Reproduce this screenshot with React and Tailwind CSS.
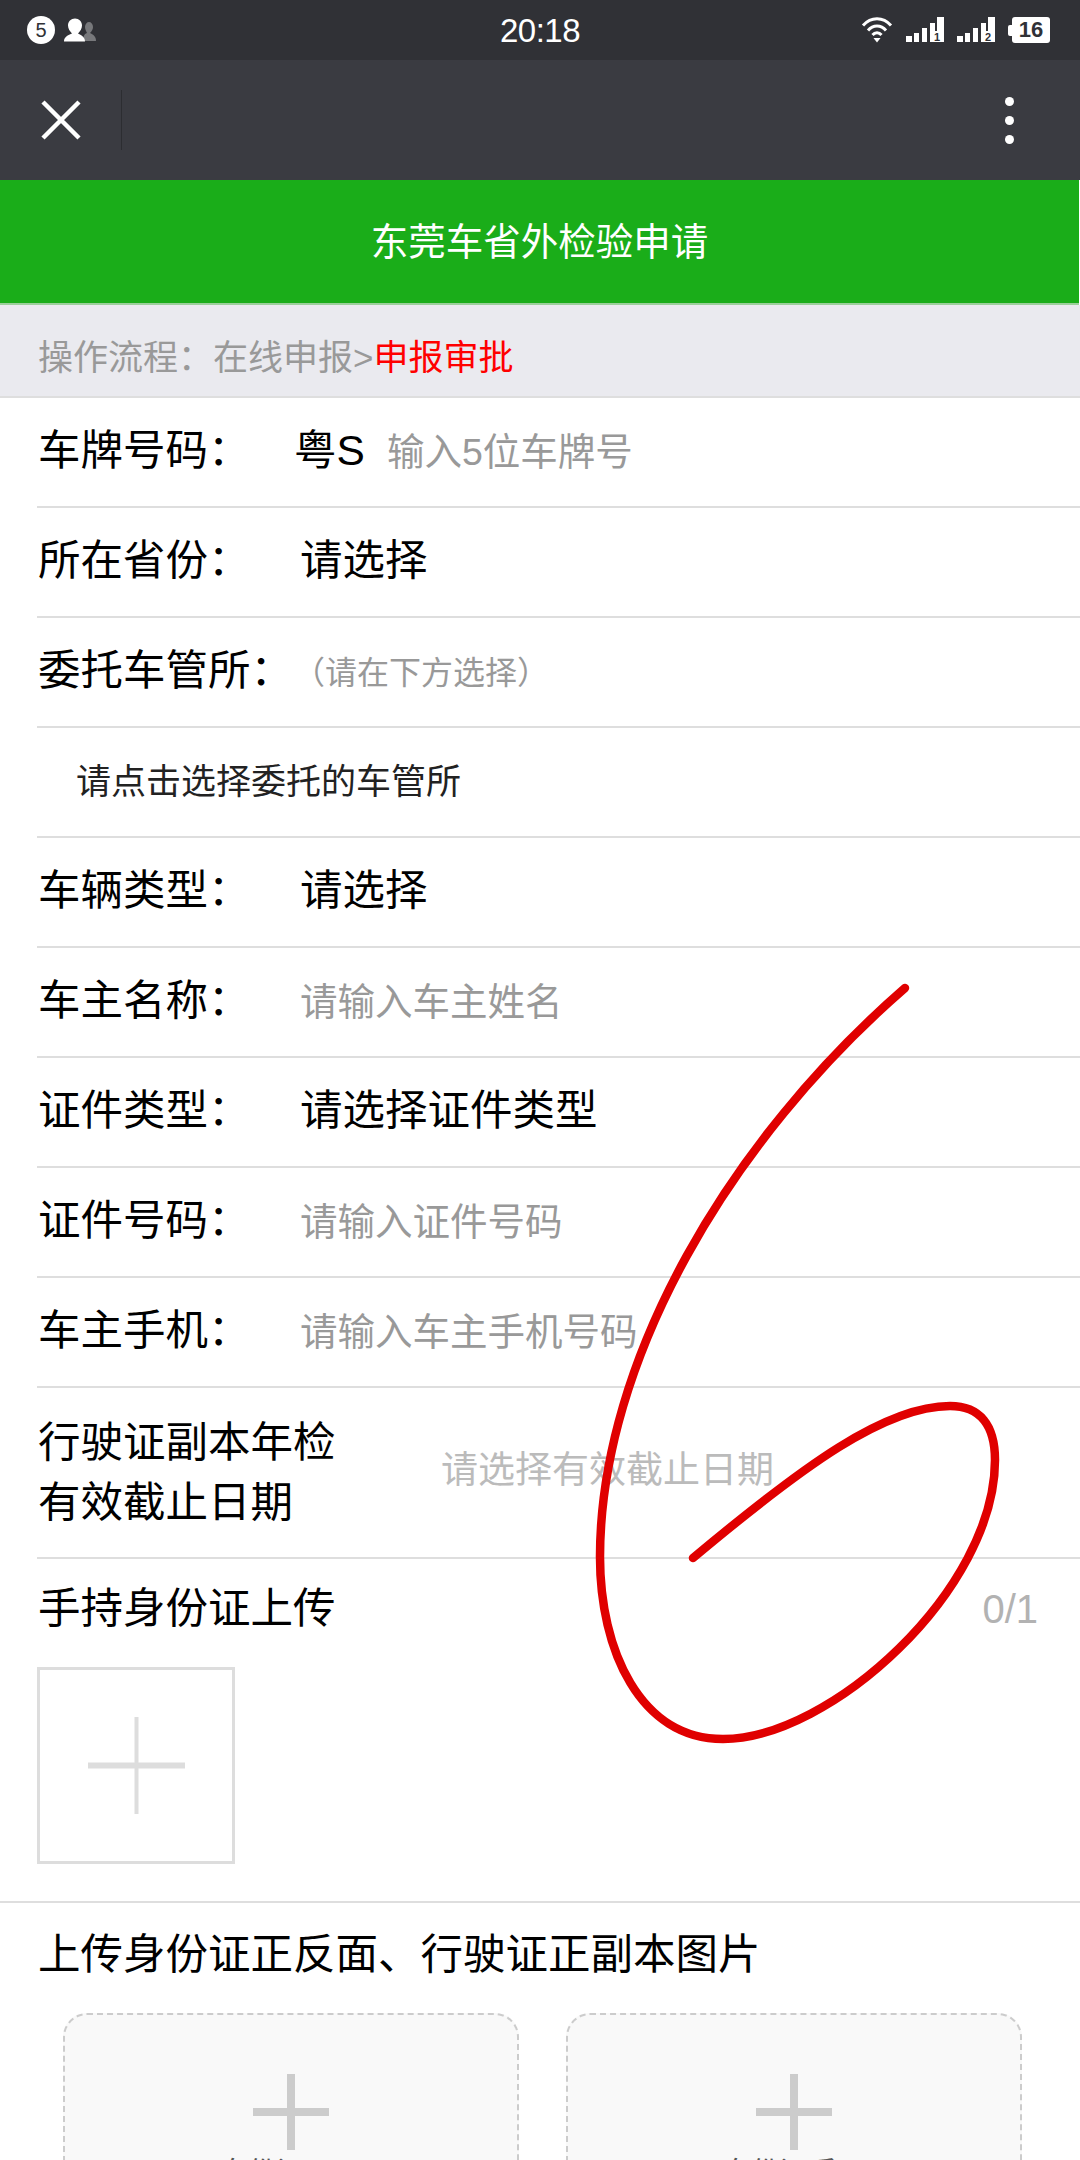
import React from 'react';

const Signal = ({ n }) => (
  <svg width="38" height="26" viewBox="0 0 38 26" className="block">
    <rect x="0" y="19" width="6" height="6" fill="#fff" />
    <rect x="8" y="16" width="5" height="9" fill="#fff" />
    <rect x="16" y="11" width="5" height="14" fill="#fff" />
    <rect x="24" y="6" width="5" height="19" fill="#fff" />
    <rect x="31" y="0" width="7" height="25" fill="#fff" />
    <rect x="24" y="14" width="14" height="11" fill="#fff" />
    <text x="31" y="24" textAnchor="middle" fontSize="11" fontWeight="700" fill="#303136" fontFamily="Liberation Sans">{n}</text>
  </svg>
);

const StatusBar = () => (
  <div className="h-[60px] bg-[#303136] flex items-center justify-between pl-[27px] pr-[30px] relative">
    <div className="flex items-center gap-[9px]">
      <div className="w-[28px] h-[28px] rounded-full bg-white flex items-center justify-center text-[20px] text-[#303136] leading-none">5</div>
      <svg width="33" height="24" viewBox="0 0 33 24" className="block">
        <path d="M19 23h13c0-4-2-6-6-8 2-2 3-4 3-6 0-3-2-5-4-5s-4 2-4 5c0 2 1 4 2 6-3 1-4 4-4 8z" fill="#77787b" />
        <path d="M0 23.500h21c0-4-3-6-7-8 2-2 4-5 4-8 0-4-3-7-7-7s-7 3-7 7c0 3 2 6 4 8-5 2-8 4-8 8z" fill="#fff" />
      </svg>
    </div>
    <div className="absolute left-[500px] top-[13px] text-[33px] leading-[36px] text-white tracking-[-0.5px]">20:18</div>
    <div className="flex items-center">
      <svg width="32" height="26" viewBox="0 0 32 26" className="block mr-[13px]">
        <path d="M2 8.500C10-.5 22-.5 30 8.500" fill="none" stroke="#fff" strokeWidth="3" />
        <path d="M7 13.500C12 7.500 20 7.500 25 13.500" fill="none" stroke="#fff" strokeWidth="3" />
        <path d="M11.500 18C14 15 18 15 20.500 18" fill="none" stroke="#fff" strokeWidth="3" />
        <path d="M12.500 21h7L16 25.500z" fill="#fff" />
      </svg>
      <Signal n="1" />
      <div className="w-[13px]" />
      <Signal n="2" />
      <div className="w-[13px]" />
      <div className="flex items-center">
        <div className="w-[4px] h-[11px] bg-white rounded-l-[2px]" />
        <div className="w-[38px] h-[26px] bg-white rounded-[3px] flex items-center justify-center text-[22px] font-bold leading-none text-[#303136]">16</div>
      </div>
    </div>
  </div>
);

const NavBar = () => (
  <div className="h-[120px] bg-[#3a3b41] flex items-center pl-[41px] pr-[66px]">
    <svg width="40" height="40" viewBox="0 0 40 40" className="block">
      <path d="M2 2l36 36M38 2L2 38" stroke="#fff" strokeWidth="4.500" fill="none" />
    </svg>
    <div className="ml-[40px] w-px h-[60px] bg-[#2c2d31]" />
    <div className="ml-auto flex flex-col gap-[10px]">
      <div className="w-[9px] h-[9px] rounded-full bg-white" />
      <div className="w-[9px] h-[9px] rounded-full bg-white" />
      <div className="w-[9px] h-[9px] rounded-full bg-white" />
    </div>
  </div>
);

const Row = ({ label, children, hint }) => (
  <div className="ml-[37px] pl-[1px] h-[110px] border-b-2 border-[#dedede] flex items-center pb-[3px]">
    <div className="w-[262px] shrink-0 text-[42.500px] text-black">{label}</div>
    {hint ? <div className="text-[37.500px] text-[#999] pt-[3px]">{hint}</div> : children}
  </div>
);

const Plus = ({ size, bar, thin, color }) => (
  <svg width={size} height={size} viewBox={`0 0 ${size} ${size}`} className="block">
    <rect x={(size - thin) / 2} y="0" width={thin} height={size} fill={color} />
    <rect x="0" y={(size - bar) / 2} width={size} height={bar} fill={color} />
  </svg>
);

const IdCard = ({ label }) => (
  <div className="w-[456px] h-[300px] shrink-0 rounded-[24px] border-2 border-dashed border-[#ccc] bg-[#f9f9f9] flex flex-col items-center pt-[59px]">
    <Plus size={76} bar={8} thin={8} color="#ccc" />
    <div className="text-[29px] leading-[40px] text-[#555] mt-[3px]">{label}</div>
  </div>
);

export default function App() {
  return (
    <div
      className="relative w-[1080px] h-[2160px] overflow-hidden bg-white"
      style={{ fontFamily: '"Liberation Sans", "Noto Sans CJK SC", sans-serif' }}
    >
      <StatusBar />
      <NavBar />
      <div className="h-[125px] w-[1079px] bg-[#1aad19] border-b-2 border-[#9ccf9b] flex items-center justify-center pt-[2px] text-[37.500px] text-white">
        东莞车省外检验申请
      </div>
      <div className="h-[93px] bg-[#eaeaef] border-b-2 border-[#dedede] flex items-center pl-[38px] pt-[15px] text-[35px] text-[#999]">
        操作流程：在线申报&gt;<span className="text-[#f00]">申报审批</span>
      </div>

      <Row label="车牌号码：">
        <div className="text-[42.500px] text-black -ml-[6px] w-[93px]">粤S</div>
        <div className="text-[37.500px] text-[#999] pt-[3px]">输入5位车牌号</div>
      </Row>
      <Row label="所在省份："><div className="text-[42.500px] text-black">请选择</div></Row>
      <Row label="委托车管所：">
        <div className="text-[32px] text-[#999] -ml-[7px] pt-[5px]">（请在下方选择）</div>
      </Row>
      <div className="ml-[37px] h-[110px] border-b-2 border-[#dedede] flex items-center pl-[39px] text-[35px] text-[#222]">
        请点击选择委托的车管所
      </div>
      <Row label="车辆类型："><div className="text-[42.500px] text-black">请选择</div></Row>
      <Row label="车主名称：" hint="请输入车主姓名" />
      <Row label="证件类型："><div className="text-[42.500px] text-black">请选择证件类型</div></Row>
      <Row label="证件号码：" hint="请输入证件号码" />
      <Row label="车主手机：" hint="请输入车主手机号码" />

      <div className="ml-[37px] pl-[1px] h-[171px] border-b-2 border-[#dedede] flex items-center">
        <div className="w-[403px] shrink-0 text-[42.500px] leading-[60px] text-black">
          行驶证副本年检<br />有效截止日期
        </div>
        <div className="text-[37px] text-[#bbb] pb-[4px]">请选择有效截止日期</div>
      </div>

      <div className="h-[344px] border-b-2 border-[#dedede] pl-[37px] pr-[42px] pt-[22px]">
        <div className="flex items-center justify-between h-[56px] pl-[1px]">
          <div className="text-[42.500px] text-black">手持身份证上传</div>
          <div className="text-[40px] text-[#b2b2b2]">0/1</div>
        </div>
        <div className="mt-[30px] w-[198px] h-[197px] border-[3px] border-[#ddd] flex items-center justify-center">
          <Plus size={97} bar={6} thin={4} color="#ddd" />
        </div>
      </div>

      <div className="pl-[38px] pt-[22px] text-[42.500px] leading-[60px] text-black">上传身份证正反面、行驶证正副本图片</div>
      <div className="flex pl-[63px] gap-[47px] mt-[28px]">
        <IdCard label="身份证正面" />
        <IdCard label="身份证反面" />
      </div>

      {/* red pen scribble drawn over the screenshot */}
      <svg width="1080" height="2160" viewBox="0 0 1080 2160" className="absolute left-0 top-0 pointer-events-none">
        <path
          d="M905 988C730 1140 600 1360 600 1557C600 1650 640 1739 723 1739C830 1739 995 1590 995 1460C995 1425 980 1406 950 1406C885 1406 803 1466 693 1558"
          fill="none"
          stroke="#e00000"
          strokeWidth="8.500"
          strokeLinecap="round"
          strokeLinejoin="round"
        />
      </svg>
    </div>
  );
}
